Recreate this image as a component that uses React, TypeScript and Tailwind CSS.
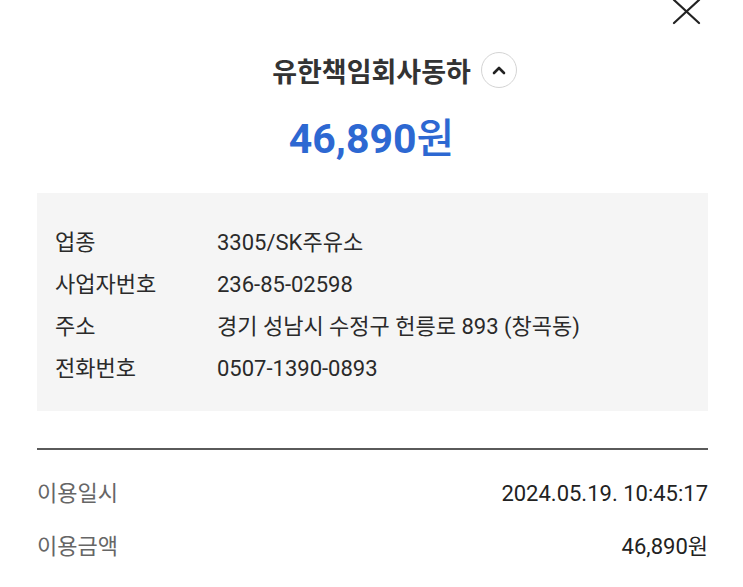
import React from "react";

const rows: [string, string][] = [
  ["업종", "3305/SK주유소"],
  ["사업자번호", "236-85-02598"],
  ["주소", "경기 성남시 수정구 헌릉로 893 (창곡동)"],
  ["전화번호", "0507-1390-0893"],
];

export default function App() {
  return (
    <div
      className="relative w-[743px] h-[587px] overflow-hidden bg-white text-[#222]"
      style={{ fontFamily: '"Roboto", "Noto Sans CJK KR", sans-serif' }}
    >
      <svg
        className="absolute left-[672px] top-[-3px]"
        width="30"
        height="28"
        viewBox="0 0 30 28"
        fill="none"
      >
        <path d="M2 3 L27 26 M27 3 L2 26" stroke="#222" strokeWidth="2.2" strokeLinecap="round" />
      </svg>

      <div className="flex justify-center pt-[54px]">
        <div className="relative">
          <h1 className="text-[27px] leading-[38px] font-bold text-[#333]">
            유한책임회사동하
          </h1>
          <button className="absolute left-[calc(100%+10px)] top-[-2px] w-[36px] h-[36px] rounded-full border border-[#d4d4d4] bg-white flex items-center justify-center">
            <svg width="14" height="10" viewBox="0 0 14 10" fill="none">
              <path d="M2 8 L7 3 L12 8" stroke="#222" strokeWidth="2.6" strokeLinecap="round" strokeLinejoin="round" />
            </svg>
          </button>
        </div>
      </div>

      <div className="flex justify-center mt-[23px]">
        <div className="text-[41px] leading-[48px] font-bold text-[#2d68d2]">
          46,890<span className="font-medium">원</span>
        </div>
      </div>

      <div className="ml-[37px] w-[671px] mt-[30px] bg-[#f5f5f5] pt-[28px] pb-[22px] pl-[18px]">
        {rows.map(([k, v]) => (
          <div key={k} className="flex h-[42px] items-center text-[22px] text-[#2a2a2a]">
            <div className="w-[162px] shrink-0">{k}</div>
            <div>{v}</div>
          </div>
        ))}
      </div>

      <div className="ml-[37px] w-[671px] mt-[37px] h-[2px] bg-[#5a5a5a]" />

      <div className="ml-[37px] w-[671px] mt-[28px] flex h-[30px] items-center justify-between text-[22px]">
        <span className="text-[#666]">이용일시</span>
        <span className="text-[#222]">2024.05.19. 10:45:17</span>
      </div>
      <div className="ml-[37px] w-[671px] mt-[23px] flex h-[30px] items-center justify-between text-[22px]">
        <span className="text-[#666]">이용금액</span>
        <span className="text-[#222]">46,890원</span>
      </div>
    </div>
  );
}
